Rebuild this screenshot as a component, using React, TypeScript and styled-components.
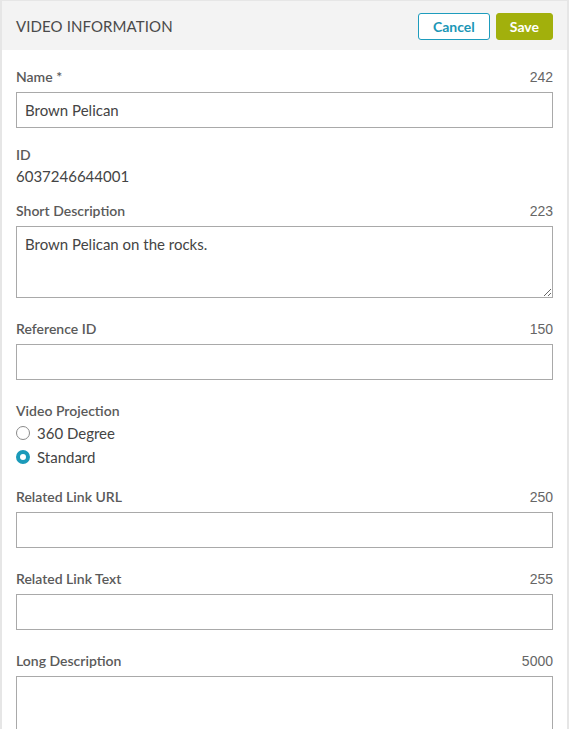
import React, { useState } from "react"
import styled, { createGlobalStyle } from "styled-components"

const GlobalStyle = createGlobalStyle`
  html, body {
    margin: 0;
    padding: 0;
    background: #ffffff;
  }
  body {
    font-family: Lato, "Open Sans", sans-serif;
    color: #444;
  }
`

const Panel = styled.div`
  width: 569px;
  height: 729px;
  box-sizing: border-box;
  border-left: 2px solid #e6e6e6;
  border-right: 2px solid #e6e6e6;
  border-top: 1px solid #e6e6e6;
  overflow: hidden;
  background: #fff;
`

const Header = styled.div`
  display: flex;
  align-items: center;
  justify-content: space-between;
  height: 49px;
  padding: 0 14px;
  background: #f3f3f3;
`

const Title = styled.h2`
  margin: 0;
  font-size: 15px;
  font-weight: 400;
  color: #4a4a4a;
  text-transform: uppercase;
  letter-spacing: 0.1px;
`

const Actions = styled.div`
  display: flex;
  gap: 6px;
  margin-top: 1px;
`

const ActionButton = styled.button<{ $primary?: boolean }>`
  height: 27px;
  box-sizing: border-box;
  padding: 0 13px;
  min-width: ${(p) => (p.$primary ? "57px" : "72px")};
  border-radius: 3px;
  font-family: Lato, sans-serif;
  font-size: 14px;
  font-weight: 700;
  cursor: pointer;
  border: 1px solid ${(p) => (p.$primary ? "#a2b00c" : "#1d9cbd")};
  background: ${(p) => (p.$primary ? "#a2b00c" : "#ffffff")};
  color: ${(p) => (p.$primary ? "#ffffff" : "#1b96b6")};
`

const Body = styled.div`
  padding: 17px 14px 0;
  display: flex;
  flex-direction: column;
`

const Field = styled.div<{ $gap?: number }>`
  display: flex;
  flex-direction: column;
  margin-bottom: ${(p) => p.$gap ?? 21}px;
`

const LabelRow = styled.div`
  display: flex;
  justify-content: space-between;
  align-items: center;
  height: 20px;
  margin-bottom: 5px;
`

const Label = styled.label`
  font-size: 14px;
  font-weight: 600;
  color: #5a5a5a;
  line-height: 20px;
`

const Count = styled.span`
  font-family: "Liberation Sans", Arial, sans-serif;
  font-size: 14px;
  color: #666;
`

const TextInput = styled.input`
  box-sizing: border-box;
  width: 100%;
  height: 36px;
  margin: 0;
  padding: 0 8px;
  border: 1px solid #a9a9a9;
  border-radius: 0;
  font-family: Lato, sans-serif;
  font-size: 15px;
  color: #444;
  outline: none;
`

const TextArea = styled.textarea<{ $height: number }>`
  box-sizing: border-box;
  display: block;
  width: 100%;
  height: ${(p) => p.$height}px;
  margin: 0;
  padding: 7px 8px;
  border: 1px solid #a9a9a9;
  border-radius: 0;
  font-family: Lato, sans-serif;
  font-size: 15px;
  line-height: 20px;
  color: #444;
  outline: none;
`

const StaticLabel = styled.div`
  font-size: 14px;
  font-weight: 600;
  color: #5a5a5a;
  line-height: 20px;
`

const StaticValue = styled.div`
  font-size: 15px;
  color: #444;
  line-height: 22px;
`

const RadioRow = styled.label`
  display: flex;
  align-items: center;
  gap: 7px;
  height: 24px;
  font-size: 15px;
  color: #444;
  cursor: pointer;
`

const RadioDot = styled.span<{ $checked: boolean }>`
  width: 14px;
  height: 14px;
  box-sizing: border-box;
  border-radius: 50%;
  border: ${(p) => (p.$checked ? "4px solid #1b9ab9" : "1px solid #8a8a8a")};
  background: #fff;
  flex: none;
`

type FieldSpec = {
  label: string
  count: number
  value?: string
  multiline?: number
}

const Input = ({ label, count, value, multiline }: FieldSpec) => {
  const [text, setText] = useState(value ?? "")
  return (
    <Field>
      <LabelRow>
        <Label>{label}</Label>
        <Count>{count}</Count>
      </LabelRow>
      {multiline ? (
        <TextArea
          $height={multiline}
          value={text}
          onChange={(e) => setText(e.target.value)}
        />
      ) : (
        <TextInput value={text} onChange={(e) => setText(e.target.value)} />
      )}
    </Field>
  )
}

const App = () => {
  const [projection, setProjection] = useState("standard")

  return (
    <>
      <GlobalStyle />
      <Panel>
        <Header>
          <Title>Video Information</Title>
          <Actions>
            <ActionButton>Cancel</ActionButton>
            <ActionButton $primary>Save</ActionButton>
          </Actions>
        </Header>
        <Body>
          <Field $gap={17}>
            <LabelRow>
              <Label>Name *</Label>
              <Count>242</Count>
            </LabelRow>
            <TextInput defaultValue="Brown Pelican" />
          </Field>
          <Field $gap={14}>
            <StaticLabel>ID</StaticLabel>
            <StaticValue>6037246644001</StaticValue>
          </Field>
          <Input
            label="Short Description"
            count={223}
            value="Brown Pelican on the rocks."
            multiline={72}
          />
          <Input label="Reference ID" count={150} />
          <Field $gap={18}>
            <StaticLabel>Video Projection</StaticLabel>
            <RadioRow onClick={() => setProjection("360")}>
              <RadioDot $checked={projection === "360"} />
              360 Degree
            </RadioRow>
            <RadioRow onClick={() => setProjection("standard")}>
              <RadioDot $checked={projection === "standard"} />
              Standard
            </RadioRow>
          </Field>
          <Input label="Related Link URL" count={250} />
          <Input label="Related Link Text" count={255} />
          <Input label="Long Description" count={5000} multiline={90} />
        </Body>
      </Panel>
    </>
  )
}

export default App
